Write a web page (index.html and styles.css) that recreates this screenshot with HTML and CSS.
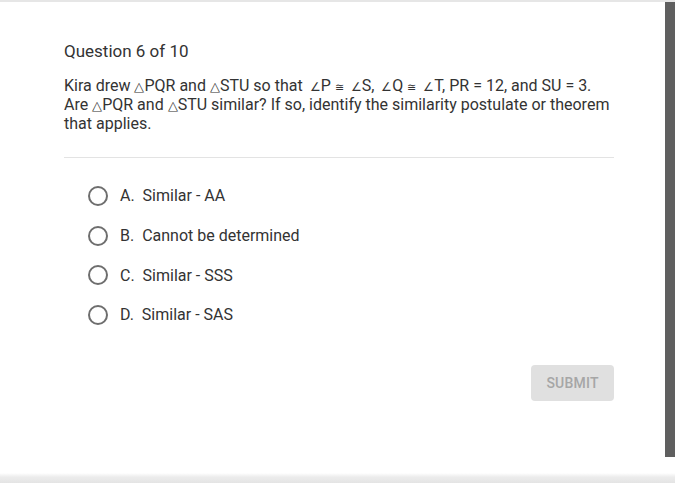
FILE: index.html
```html
<!DOCTYPE html>
<html>
<head>
<meta charset="utf-8">
<link rel="stylesheet" href="styles.css">
</head>
<body>
<div class="topline"></div>
<div class="frame">
  <main class="main">
    <h1 class="qnum">Question 6 of 10</h1>
    <p class="qtext">Kira drew <span class="sym">△</span>PQR and <span class="sym">△</span>STU so that <span class="ang">∠</span>P <span class="cong">≅</span> <span class="ang">∠</span>S, <span class="ang">∠</span>Q <span class="cong">≅</span> <span class="ang">∠</span>T, PR = 12, and SU = 3. Are <span class="sym">△</span>PQR and <span class="sym">△</span>STU similar? If so, identify the similarity postulate or theorem that applies.</p>
    <hr class="divider">
    <ul class="options">
      <li class="opt"><span class="radio"></span><span class="label">A.&nbsp; Similar - AA</span></li>
      <li class="opt"><span class="radio"></span><span class="label">B.&nbsp; Cannot be determined</span></li>
      <li class="opt"><span class="radio"></span><span class="label">C.&nbsp; Similar - SSS</span></li>
      <li class="opt"><span class="radio"></span><span class="label">D.&nbsp; Similar - SAS</span></li>
    </ul>
    <div class="actions"><button class="submit">SUBMIT</button></div>
  </main>
  <div class="scrollbar"></div>
</div>
<div class="bottom"></div>
</body>
</html>
```

FILE: styles.css
```css
html, body {
  margin: 0;
  padding: 0;
  background: #fff;
  font-family: Roboto, "Liberation Sans", sans-serif;
  color: #333;
}
body {
  width: 675px;
  height: 483px;
  overflow: hidden;
  display: flex;
  flex-direction: column;
}
.topline {
  height: 2px;
  background: #e6e6e6;
}
.frame {
  display: flex;
  height: 455px;
}
.main {
  flex: 1;
  padding: 0 51px 0 64px;
}
.scrollbar {
  width: 10px;
  background: #5f5f5f;
}
.qnum {
  margin: 39px 0 0;
  font-size: 17px;
  font-weight: 400;
  line-height: 20px;
  color: #333;
}
.qtext {
  margin: 15px 0 0;
  font-size: 16px;
  line-height: 19px;
  color: #333;
}
.sym, .ang, .cong {
  line-height: 10px;
  display: inline-block;
}
.sym { font-size: 13px; }
.ang { font-size: 12px; margin-left: 3px; }
.cong { font-size: 11px; }
.divider {
  border: 0;
  border-top: 1px solid #e3e3e3;
  margin: 24px 0 0;
}
.options {
  list-style: none;
  margin: 18px 0 0;
  padding: 0 0 0 24px;
}
.opt {
  display: flex;
  align-items: center;
  height: 39.7px;
}
.radio {
  width: 16px;
  height: 16px;
  border: 2px solid #6e6e6e;
  border-radius: 50%;
  margin-right: 12px;
  flex: none;
}
.label {
  font-size: 16px;
  color: #333;
}
.actions {
  display: flex;
  justify-content: flex-end;
  margin-top: 30px;
}
.submit {
  width: 83px;
  height: 36px;
  border: 0;
  border-radius: 4px;
  background: #e0e0e0;
  color: #a6a6a6;
  font-family: Roboto, "Liberation Sans", sans-serif;
  font-size: 14px;
  font-weight: 500;
  letter-spacing: 0.2px;
}
.bottom {
  flex: 1;
  background: linear-gradient(#fff 0, #fff 16px, #ececec 20px, #e4e4e4 100%);
}
```
